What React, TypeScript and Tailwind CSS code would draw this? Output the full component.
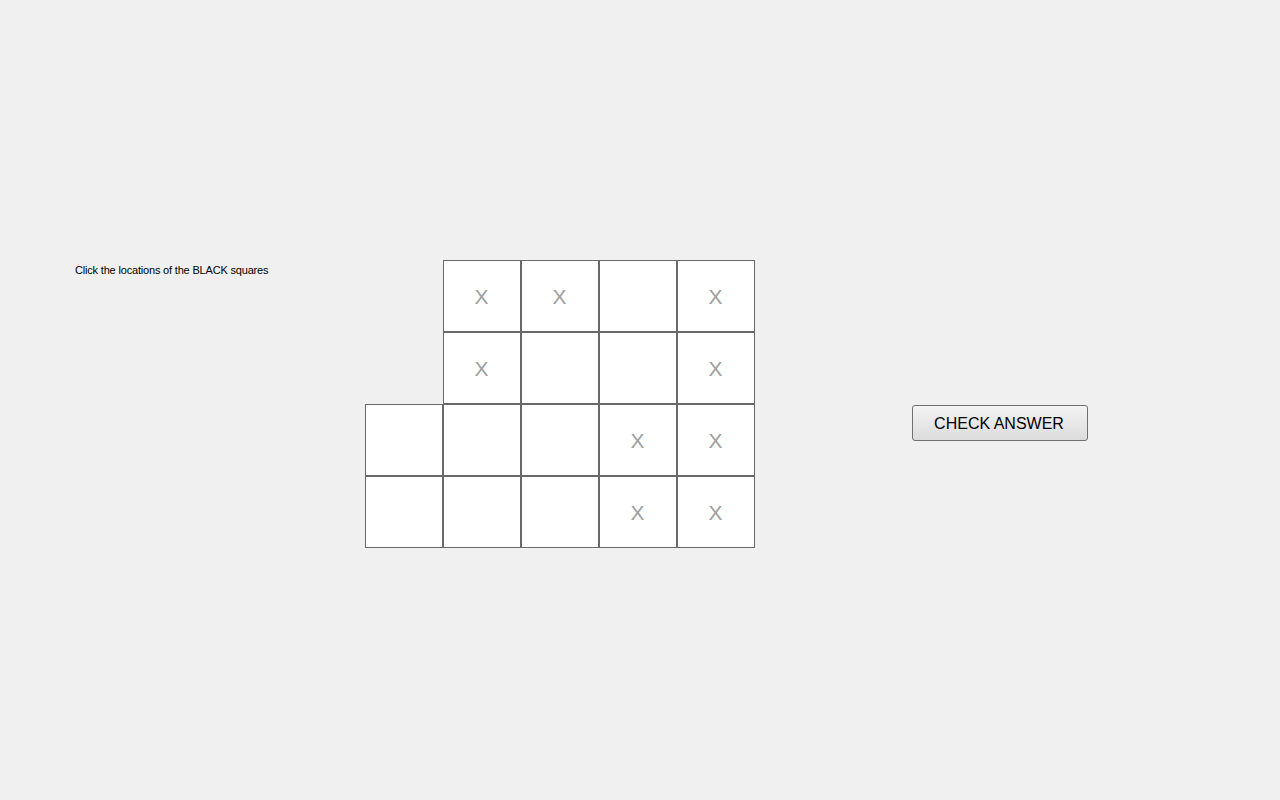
const cells: (string | null)[][] = [
  [null, 'X', 'X', '', 'X'],
  [null, 'X', '', '', 'X'],
  ['', '', '', 'X', 'X'],
  ['', '', '', 'X', 'X'],
];

export default function App() {
  return (
    <div className="flex h-[800px] w-[1280px] items-start bg-[#f0f0f0] pt-[260px] font-['Liberation_Sans',Arial,sans-serif]">
      <div className="ml-[75px] mt-[3px] w-[290px] text-[11px] leading-[14px] tracking-[-0.18px] text-black">
        Click the locations of the BLACK squares
      </div>
      <div className="grid grid-cols-[repeat(5,78px)] grid-rows-[repeat(4,72px)]">
        {cells.flatMap((row, r) =>
          row.map((c, i) =>
            c === null ? (
              <div key={`${r}-${i}`} />
            ) : (
              <div
                key={`${r}-${i}`}
                className="flex items-center justify-center border border-[#696969] bg-white pr-[1px] pt-[1px] text-[21px] text-[#a0a0a0]"
              >
                {c}
              </div>
            )
          )
        )}
      </div>
      <button className="ml-[157px] mt-[145px] h-[36px] w-[176px] rounded-[3px] border border-[#707070] bg-gradient-to-b from-[#f3f3f3] to-[#dcdcdc] pr-[2px] pt-[1px] text-[16px] text-black">
        CHECK ANSWER
      </button>
    </div>
  );
}
